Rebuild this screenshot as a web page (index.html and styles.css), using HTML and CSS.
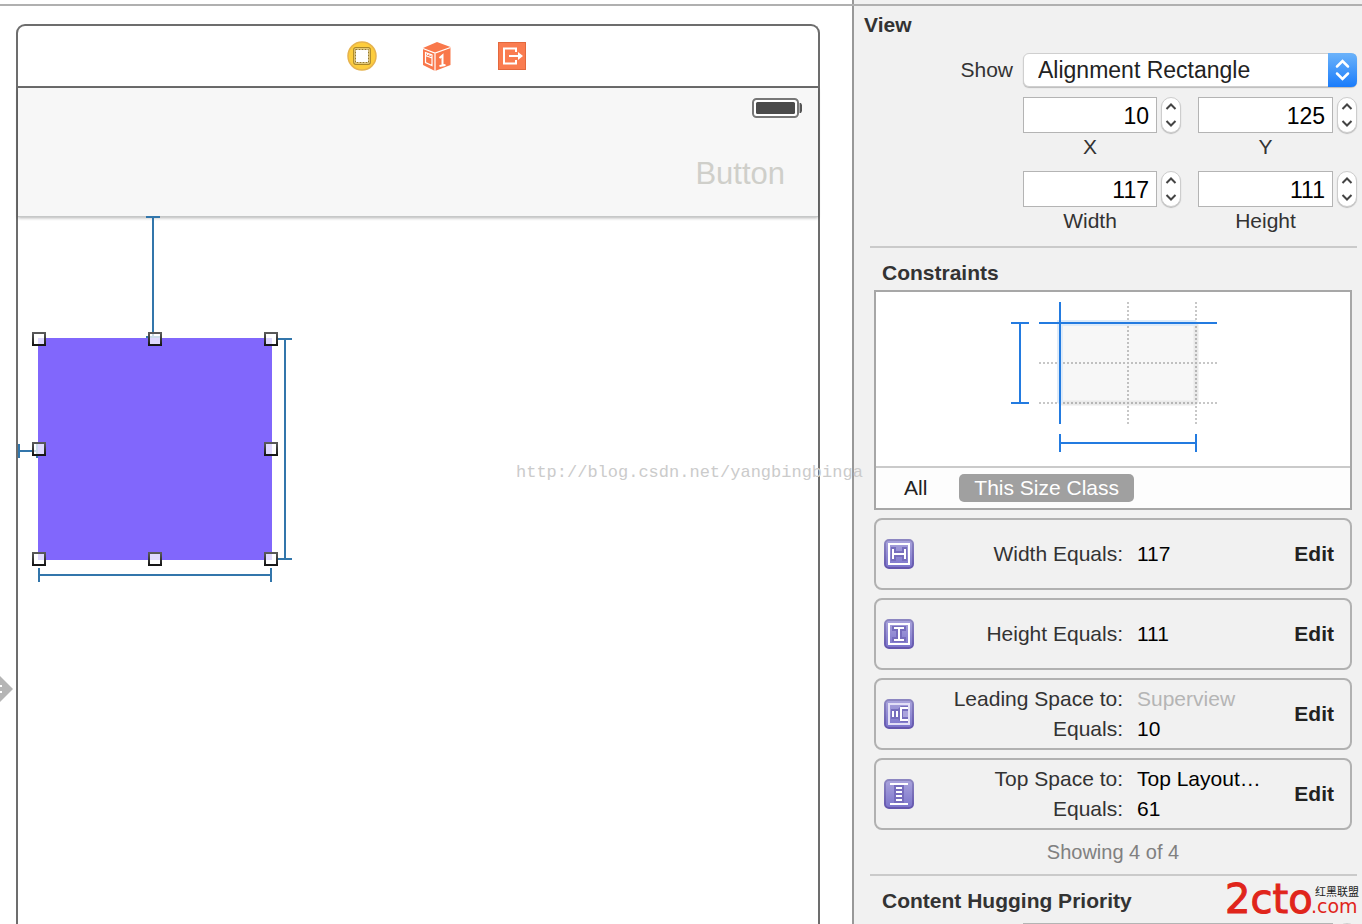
FILE: index.html
```html
<!DOCTYPE html>
<html lang="en">
<head>
<meta charset="utf-8">
<title>Size Inspector</title>
<link rel="stylesheet" href="styles.css">
</head>
<body>
<div class="topbar"><div class="topbar-canvas"></div><div class="topbar-panel"></div></div>
<div class="workspace">
  <main class="canvas">
    <svg class="entry-arrow" width="14" height="32" viewBox="0 0 14 32" aria-hidden="true">
      <path d="M0 3L13 16L0 29Z" fill="#b5b5b5"/>
      <path d="M0 13H2M0 19H2" stroke="#fff" stroke-width="2"/>
    </svg>
    <section class="device">
      <header class="dock">
        <svg width="30" height="30" viewBox="0 0 30 30" role="img" aria-label="View Controller">
          <circle cx="15" cy="15" r="14" fill="#fdcd3d" stroke="#e6b34e" stroke-width="1.5"/>
          <rect x="6.7" y="6.7" width="16.6" height="16.6" rx="2" fill="#f8df94" stroke="#a8862b" stroke-width="1.2"/>
          <rect x="8.5" y="8.5" width="13" height="13" fill="#fff" stroke="#967a2c" stroke-dasharray="2 1"/>
        </svg>
        <svg width="30" height="30" viewBox="0 0 30 30" role="img" aria-label="First Responder">
          <path d="M15 1L28.500 6V24L13 30L1 24V7Z" fill="#f9784b"/>
          <path d="M1 7.500L13 12L28.500 6.500M13 12V30" fill="none" stroke="#fff" stroke-width="1.2"/>
          <path d="M3.500 11.500L10 14V24.500L3.500 21.500Z M3.500 14.500L10 17M5.500 12.500V14M8 13.500V15" fill="none" stroke="#fff" stroke-width="1.2"/>
          <path d="M17.500 17L20.500 14.500V24.500M17.500 25L23.500 24" fill="none" stroke="#fff" stroke-width="2"/>
        </svg>
        <svg width="30" height="30" viewBox="0 0 30 30" role="img" aria-label="Exit">
          <rect x="1.5" y="1.5" width="27" height="27" fill="#fa7c50" stroke="#e3683d"/>
          <path d="M19 11V7.500H7V22.500H19V19" fill="none" stroke="#fff" stroke-width="2"/>
          <path d="M12 15H23" stroke="#fff" stroke-width="2"/>
          <path d="M21 11L26 15L21 19Z" fill="#fff"/>
        </svg>
      </header>
      <div class="navbar">
        <svg class="battery" width="50" height="20" viewBox="0 0 50 20" aria-hidden="true">
          <rect x="1" y="1" width="45" height="18" rx="3.500" fill="#fff" stroke="#777" stroke-width="2"/>
          <rect x="4" y="4" width="39" height="12" rx="1.500" fill="#4a4a4a"/>
          <path d="M47 5H48V15H47Z" fill="#aaa"/><path d="M48 5H49L50 7V13L49 15H48Z" fill="#555"/>
        </svg>
        <button class="bar-button" type="button">Button</button>
      </div>
      <svg class="selection" width="280" height="370" viewBox="18 216 280 370" role="img" aria-label="Selected view">
        <defs>
          <linearGradient id="edge" x1="0" y1="0" x2="0" y2="1"><stop offset="0" stop-color="#5a5a5a"/><stop offset="1" stop-color="#161616"/></linearGradient>
          <rect id="handle" x="-6" y="-6" width="12" height="12" fill="#fff" fill-opacity=".75" stroke="url(#edge)" stroke-width="2"/>
        </defs>
        <rect x="38" y="338" width="234" height="222" fill="#8167fc"/>
        <path d="M153 217V337M146 217H160M146 337H160M19 451H37M19 444V458M37 444V458M285 339V559M278 339H292M278 559H292M39 575H271M39 568V582M271 568V582" fill="none" stroke="#3276ab" stroke-width="2"/>
        <use href="#handle" x="39" y="339"/><use href="#handle" x="155" y="339"/><use href="#handle" x="271" y="339"/>
        <use href="#handle" x="39" y="449"/><use href="#handle" x="271" y="449"/>
        <use href="#handle" x="39" y="559"/><use href="#handle" x="155" y="559"/><use href="#handle" x="271" y="559"/>
      </svg>
    </section>
    <p class="watermark">http://blog.csdn.net/yangbingbinga</p>
  </main>

  <aside class="panel">
    <section class="view-section">
      <h2 class="panel-title">View</h2>
      <div class="form">
        <label class="show-label" for="show">Show</label>
        <div class="popup">
          <select id="show" class="popup-select"><option>Alignment Rectangle</option></select>
          <svg class="popup-arrows" width="29" height="34" viewBox="0 0 29 34" aria-hidden="true">
            <defs><linearGradient id="blue" x1="0" y1="0" x2="0" y2="1"><stop offset="0" stop-color="#6cb3fa"/><stop offset="1" stop-color="#1a7cfb"/></linearGradient></defs>
            <path d="M0 0H23Q29 0 29 6V28Q29 34 23 34H0Z" fill="url(#blue)"/>
            <path d="M9 13.500L14.500 8L20 13.500M9 20.500L14.500 26L20 20.500" fill="none" stroke="#fff" stroke-width="2.500" stroke-linecap="round"/>
          </svg>
        </div>
        <div class="field field-first">
          <input class="number" id="x" type="text" value="10">
          <div class="stepper"><button type="button" class="step" aria-label="Increase X"><svg width="12" height="7" viewBox="0 0 12 7"><path d="M1.500 6L6 1.500L10.500 6"/></svg></button><button type="button" class="step" aria-label="Decrease X"><svg width="12" height="7" viewBox="0 0 12 7"><path d="M1.500 1L6 5.500L10.500 1"/></svg></button></div>
          <label class="caption" for="x">X</label>
        </div>
        <div class="field">
          <input class="number" id="y" type="text" value="125">
          <div class="stepper"><button type="button" class="step" aria-label="Increase Y"><svg width="12" height="7" viewBox="0 0 12 7"><path d="M1.500 6L6 1.500L10.500 6"/></svg></button><button type="button" class="step" aria-label="Decrease Y"><svg width="12" height="7" viewBox="0 0 12 7"><path d="M1.500 1L6 5.500L10.500 1"/></svg></button></div>
          <label class="caption" for="y">Y</label>
        </div>
        <div class="field field-first">
          <input class="number" id="width" type="text" value="117">
          <div class="stepper"><button type="button" class="step" aria-label="Increase width"><svg width="12" height="7" viewBox="0 0 12 7"><path d="M1.500 6L6 1.500L10.500 6"/></svg></button><button type="button" class="step" aria-label="Decrease width"><svg width="12" height="7" viewBox="0 0 12 7"><path d="M1.500 1L6 5.500L10.500 1"/></svg></button></div>
          <label class="caption" for="width">Width</label>
        </div>
        <div class="field">
          <input class="number" id="height" type="text" value="111">
          <div class="stepper"><button type="button" class="step" aria-label="Increase height"><svg width="12" height="7" viewBox="0 0 12 7"><path d="M1.500 6L6 1.500L10.500 6"/></svg></button><button type="button" class="step" aria-label="Decrease height"><svg width="12" height="7" viewBox="0 0 12 7"><path d="M1.500 1L6 5.500L10.500 1"/></svg></button></div>
          <label class="caption" for="height">Height</label>
        </div>
      </div>
    </section>

    <section class="section">
      <h2 class="section-title">Constraints</h2>
      <div class="constraints">
        <div class="overview">
          <div class="diagram">
            <svg width="208" height="150" viewBox="1009 302 208 150" role="img" aria-label="Constraint overview">
              <rect x="1060" y="323" width="136" height="80" rx="2" fill="#f7f7f7" stroke="#eaeaea" stroke-width="5"/>
              <path d="M1060 403V323H1196" fill="none" stroke="#deebf9" stroke-width="6"/>
              <path d="M1128 302V424M1196 302V424M1039 363H1217M1039 403H1217" fill="none" stroke="#000" stroke-opacity=".22" stroke-width="2" stroke-dasharray="2 2"/>
              <path d="M1060 302V424M1039 323H1217M1020 323V403M1011 323H1029M1011 403H1029M1060 443H1196M1060 434V452M1196 434V452" fill="none" stroke="#237be0" stroke-width="2"/>
            </svg>
          </div>
          <div class="tabs">
            <button type="button" class="tab">All</button>
            <button type="button" class="tab tab-active">This Size Class</button>
          </div>
        </div>

        <article class="card">
          <svg class="kind" width="30" height="30" viewBox="0 0 30 30" aria-hidden="true">
            <defs><linearGradient id="fill" x1="0" y1="0" x2="0" y2="1"><stop offset="0" stop-color="#aaa4dc"/><stop offset="1" stop-color="#7b74cb"/></linearGradient><linearGradient id="rim" x1="0" y1="0" x2="0" y2="1"><stop offset="0" stop-color="#8c86c1"/><stop offset="1" stop-color="#6456ae"/></linearGradient></defs>
            <rect x="1" y="1" width="28" height="28" rx="4" fill="url(#fill)" stroke="url(#rim)" stroke-width="2"/>
            <rect x="5" y="5" width="20" height="20" fill="none" stroke="#fff" stroke-width="2"/>
            <path d="M7 8H12V12H18V8H23V22H18V18H12V22H7Z" fill="#766dbd"/>
            <path d="M9 10V20M21 10V20M9 15H21" stroke="#fff" stroke-width="2"/>
          </svg>
          <dl class="facts"><dt>Width Equals:</dt><dd>117</dd></dl>
          <button type="button" class="edit">Edit</button>
        </article>

        <article class="card">
          <svg class="kind" width="30" height="30" viewBox="0 0 30 30" aria-hidden="true">
            <rect x="1" y="1" width="28" height="28" rx="4" fill="url(#fill)" stroke="url(#rim)" stroke-width="2"/>
            <rect x="5" y="5" width="20" height="20" fill="none" stroke="#fff" stroke-width="2"/>
            <path d="M8 7H22V12H18V18H22V23H8V18H12V12H8Z" fill="#766dbd"/>
            <path d="M10 9H20M10 21H20M15 9V21" stroke="#fff" stroke-width="2"/>
          </svg>
          <dl class="facts"><dt>Height Equals:</dt><dd>111</dd></dl>
          <button type="button" class="edit">Edit</button>
        </article>

        <article class="card">
          <svg class="kind" width="30" height="30" viewBox="0 0 30 30" aria-hidden="true">
            <rect x="1" y="1" width="28" height="28" rx="4" fill="url(#fill)" stroke="url(#rim)" stroke-width="2"/>
            <rect x="5" y="5" width="20" height="20" fill="none" stroke="#e2dff6" stroke-width="2"/>
            <path d="M7 10H14L17 7H24V23H17L14 20H7Z" fill="#766dbd"/>
            <path d="M9 12V18M13 12V18M24 9H17V21H24" fill="none" stroke="#fff" stroke-width="2"/>
            <path d="M19 12H24V18H19Z" fill="#aaa3dc"/>
          </svg>
          <dl class="facts"><dt>Leading Space to:</dt><dd class="muted">Superview</dd><dt>Equals:</dt><dd>10</dd></dl>
          <button type="button" class="edit">Edit</button>
        </article>

        <article class="card">
          <svg class="kind" width="30" height="30" viewBox="0 0 30 30" aria-hidden="true">
            <rect x="1" y="1" width="28" height="28" rx="4" fill="url(#fill)" stroke="url(#rim)" stroke-width="2"/>
            <rect x="10" y="6" width="10" height="18" fill="#766dbd"/>
            <path d="M6 5H24M6 25H24M12 9H18M12 13H18M12 17H18M12 21H18" stroke="#fff" stroke-width="2"/>
          </svg>
          <dl class="facts"><dt>Top Space to:</dt><dd>Top Layout…</dd><dt>Equals:</dt><dd>61</dd></dl>
          <button type="button" class="edit">Edit</button>
        </article>
        <p class="count">Showing 4 of 4</p>
      </div>
    </section>

    <section class="section">
      <h2 class="section-title">Content Hugging Priority</h2>
      <div class="priority">
        <input class="number" type="text" aria-label="Horizontal priority">
        <div class="stepper"></div>
      </div>
    </section>

    <svg class="logo" width="136" height="50" viewBox="0 0 136 50" role="img" aria-label="2cto.com">
      <text class="logo-main" x="0" y="39">2cto</text>
      <text class="logo-com" x="86" y="39">.com</text>
      <text class="logo-cn" x="90" y="22">红黑联盟</text>
    </svg>
  </aside>
</div>
</body>
</html>
```
FILE: styles.css
```css
* { box-sizing: border-box; }

body {
  margin: 0;
  height: 100vh;
  display: flex;
  flex-direction: column;
  overflow: hidden;
  background: #fff;
  color: #333;
  font: 21px/30px "Liberation Sans", Arial, sans-serif;
}

h2, p, dl, dd { margin: 0; }

button, input, select {
  font: inherit;
  color: inherit;
  margin: 0;
  padding: 0;
  border: 0;
  background: none;
}

svg { display: block; flex: none; }

.topbar {
  display: flex;
  flex: none;
  height: 6px;
  border-bottom: 2px solid #b0b0b0;
}
.topbar-canvas { flex: 1; }
.topbar-panel {
  width: 510px;
  border-left: 2px solid #989898;
  background: #f1f1f1;
}

.workspace { display: flex; flex: 1; min-height: 0; }

.canvas {
  position: relative;
  z-index: 1;
  display: flex;
  flex: 1;
  min-width: 0;
  padding: 18px 32px 0 16px;
}

.entry-arrow { position: absolute; left: 0; top: 667px; }

.device {
  position: relative;
  flex: 1;
  border: 2px solid #6d6d6d;
  border-bottom: 0;
  border-radius: 9px 9px 0 0;
}

.dock {
  display: flex;
  justify-content: center;
  align-items: center;
  gap: 45px;
  height: 62px;
  padding-left: 38px;
  border-bottom: 2px solid #6d6d6d;
}

.navbar {
  display: flex;
  flex-direction: column;
  align-items: flex-end;
  gap: 38px;
  height: 129px;
  padding: 10px 16px 0;
  background: #f7f7f7;
  border-bottom: 1px solid #c6c8c8;
  box-shadow: 0 1px 3px rgba(0, 0, 0, .3);
}
.bar-button {
  padding-right: 17px;
  color: #cfcfca;
  font-size: 31px;
  line-height: 36px;
}

.selection { position: absolute; left: 0; top: 190px; }

.watermark {
  position: absolute;
  left: 516px;
  top: 452px;
  color: #cbcbcb;
  font: 17px/30px "Liberation Mono", monospace;
  white-space: nowrap;
}

.panel {
  position: relative;
  flex: none;
  width: 510px;
  padding-right: 5px;
  border-left: 2px solid #989898;
  background: #f1f1f1;
}

.view-section { padding: 4px 0 11px 10px; }
.panel-title, .section-title { font-size: 21px; line-height: 30px; }

.form {
  display: grid;
  grid-template-columns: 1fr 158px 159px;
  column-gap: 17px;
  row-gap: 10px;
  padding-top: 13px;
}
.show-label {
  justify-self: end;
  line-height: 34px;
  margin-right: -7px;
}
.popup { grid-column: 2 / 4; position: relative; height: 34px; }
.popup-select {
  width: 100%;
  height: 34px;
  padding-left: 14px;
  appearance: none;
  border: 1px solid #cfcfcf;
  border-radius: 6px;
  background: #fff;
  box-shadow: 0 1px 1px #bbb;
  color: #222;
  font-size: 23px;
}
.popup-arrows { position: absolute; right: 0; top: 0; pointer-events: none; }

.field {
  display: grid;
  grid-template-columns: 1fr 20px;
  column-gap: 4px;
}
.field-first { grid-column: 2; }
.number {
  width: 100%;
  height: 36px;
  padding: 2px 7px 0;
  border: 1px solid #b4b4b4;
  background: #fff;
  color: #000;
  font-size: 23px;
  text-align: right;
}
.stepper {
  display: flex;
  flex-direction: column;
  width: 20px;
  height: 36px;
  border: 1px solid #cdcdcd;
  border-radius: 10px;
  background: #fff;
  box-shadow: 0 1px 1px #bbb;
}
.step {
  display: flex;
  flex: 1;
  justify-content: center;
  align-items: center;
}
.step path { fill: none; stroke: #444; stroke-width: 2; }
.caption { text-align: center; line-height: 28px; }

.section {
  margin-left: 16px;
  padding-top: 10px;
  border-top: 2px solid #cacaca;
}
.section-title { padding-left: 12px; }
.constraints {
  display: flex;
  flex-direction: column;
  gap: 8px;
  padding: 2px 5px 8px 4px;
}
.overview { border: 2px solid #a7a7a7; background: #fff; }
.diagram { display: flex; justify-content: center; padding: 10px 0 14px; }
.tabs {
  display: flex;
  gap: 18px;
  padding: 6px 14px;
  border-top: 2px solid #cacaca;
  background: #fdfdfd;
}
.tab {
  height: 28px;
  padding: 0 14px;
  border-radius: 5px;
  color: #222;
  line-height: 28px;
}
.tab-active { padding: 0 15px; background: #a0a0a0; color: #fff; }

.card {
  display: flex;
  align-items: center;
  height: 72px;
  padding: 0 16px 0 8px;
  border: 2px solid #b1b1b1;
  border-radius: 8px;
}
.facts {
  display: grid;
  grid-template-columns: 209px 1fr;
  column-gap: 14px;
  flex: 1;
}
.facts dt { text-align: right; }
.facts dd { color: #000; white-space: nowrap; }
.facts .muted { color: #b5b5b5; }
.edit { color: #222; font-weight: bold; }
.count { color: #808080; font-size: 20px; line-height: 28px; text-align: center; }

.priority {
  display: grid;
  grid-template-columns: 1fr 20px;
  column-gap: 4px;
  padding: 7px 0 0 153px;
}

.logo { position: absolute; right: 1px; bottom: 0; }
.logo-main, .logo-com { fill: #e0251b; stroke: #e0251b; font-family: "DejaVu Sans", sans-serif; }
.logo-main { font-size: 40px; stroke-width: 1px; }
.logo-com { font-size: 19px; stroke-width: 0; }
.logo-cn { fill: #222; font: 11px "Noto Sans CJK SC", sans-serif; }
```
